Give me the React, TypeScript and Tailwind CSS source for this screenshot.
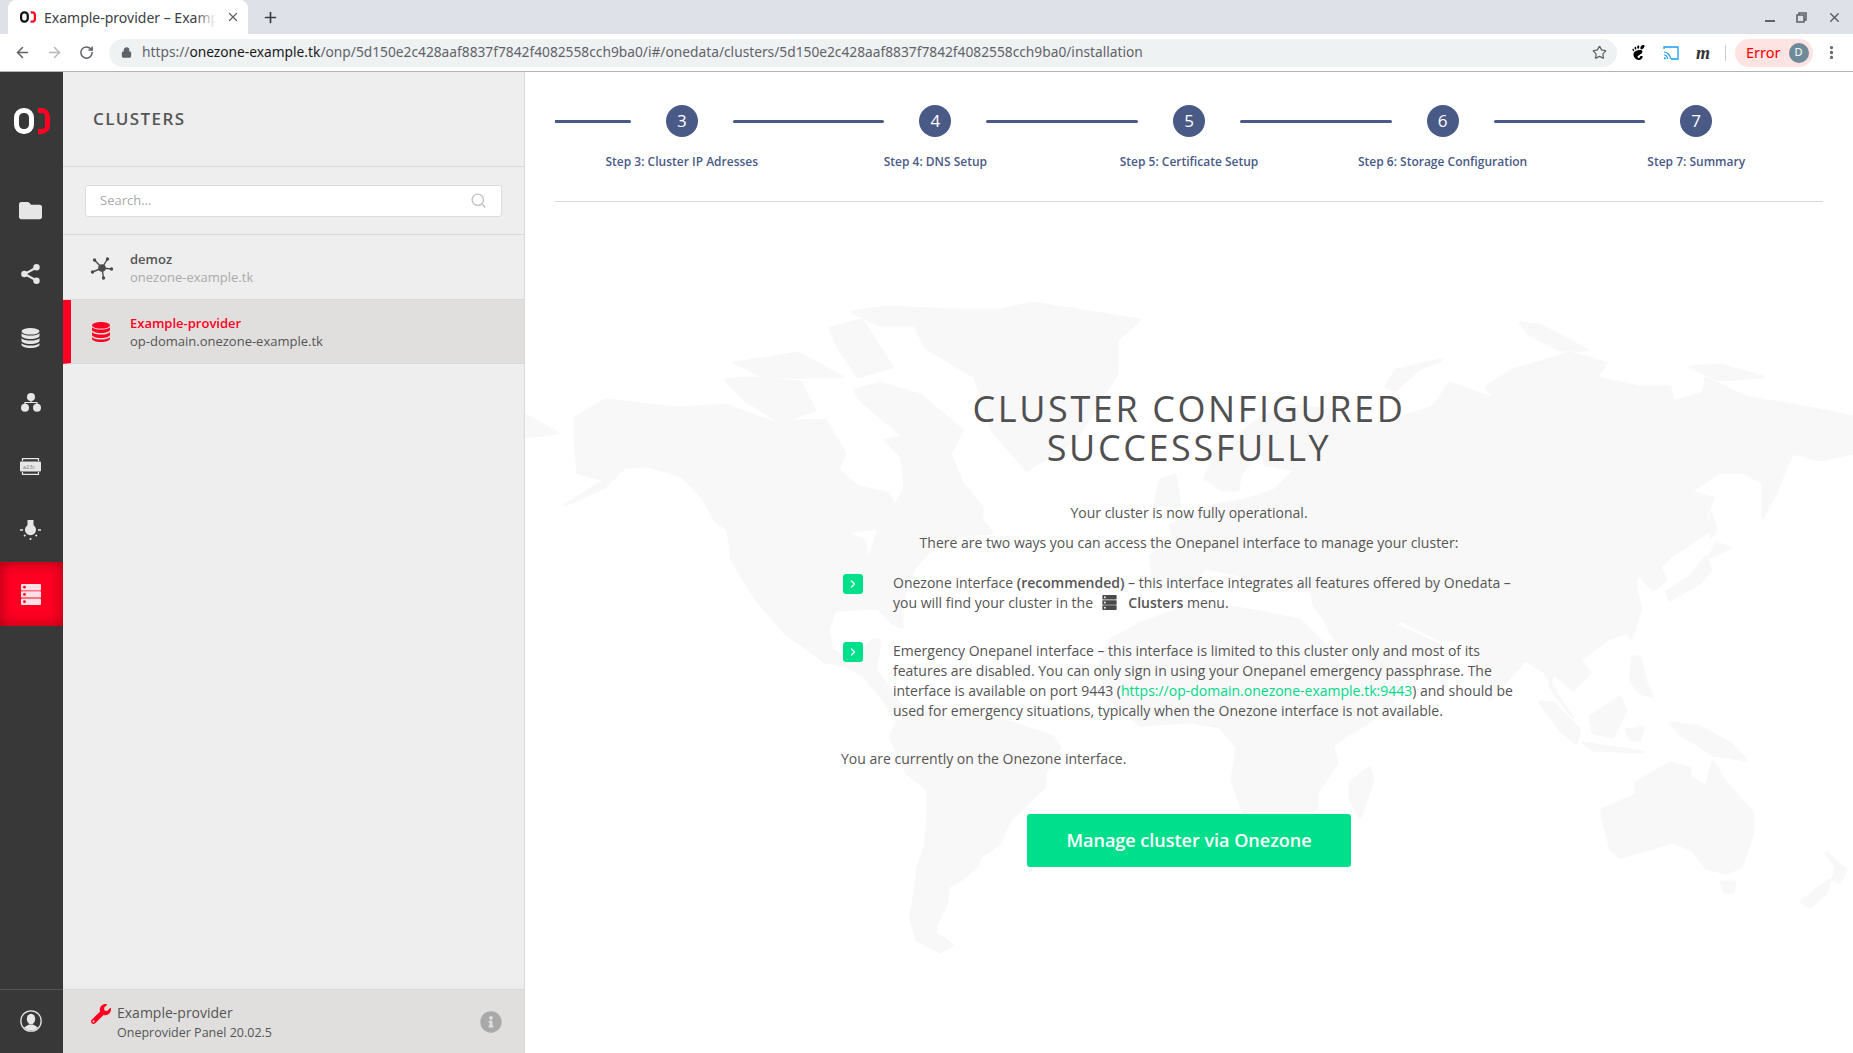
import { ArrowLeft, ArrowRight, ChevronRight, Lock, MoreVertical, Plus, RotateCw, Search, Star, X } from 'lucide-react';
import { FaFolder, FaInfoCircle, FaWrench } from 'react-icons/fa';
import { SiGnome } from 'react-icons/si';

const STEPS = [
  { n: 3, label: 'Step 3: Cluster IP Adresses' },
  { n: 4, label: 'Step 4: DNS Setup' },
  { n: 5, label: 'Step 5: Certificate Setup' },
  { n: 6, label: 'Step 6: Storage Configuration' },
  { n: 7, label: 'Step 7: Summary' },
];

// land masses, in page coordinates
const LAND = [
  // north america
  '575,418 605,400 675,408 725,405 772,422 825,420 845,453 838,470 858,487 888,493 895,507 905,487 902,457 885,440 928,433 948,448 962,483 982,507 982,520 992,533 960,535 928,553 915,567 905,590 902,607 902,627 892,623 878,608 835,610 828,630 832,650 852,663 872,640 880,640 878,655 875,670 890,690 905,712 893,715 880,695 863,675 843,665 825,662 802,645 785,633 765,610 752,593 732,560 728,530 715,520 702,497 682,476 648,466 625,467 605,487 565,505 605,480 578,473 575,440',
  // arctic islands
  '855,390 880,383 920,395 962,430 952,450 905,437 860,400',
  '725,380 750,378 800,382 815,410 780,422 745,400',
  '735,363 798,353 842,377 765,377',
  '830,328 862,320 892,367 858,377 838,347',
  // greenland
  '852,312 885,307 958,310 1000,310 1033,303 1140,320 1117,340 1117,373 1095,410 1075,440 1027,470 1000,440 992,430 975,377 925,347 915,325 880,325',
  // south america
  '890,737 907,773 928,790 928,817 925,847 918,867 915,893 910,917 917,940 940,952 953,945 935,933 937,923 947,903 948,887 960,880 977,867 980,857 1000,843 1010,820 1045,787 1045,773 1060,747 1053,737 1013,723 977,717 950,717 917,713 897,722',
  // africa
  '1133,628 1160,610 1200,603 1250,610 1300,620 1330,650 1350,680 1385,690 1400,672 1395,700 1365,725 1347,735 1333,745 1337,763 1317,793 1317,807 1290,830 1265,840 1243,813 1232,780 1237,747 1220,727 1190,722 1140,725 1110,700 1098,670 1110,640',
  '1370,767 1373,780 1360,817 1350,800 1350,783',
  // eurasia
  '1257,420 1290,405 1330,410 1345,425 1380,425 1433,407 1450,383 1496,400 1486,387 1513,370 1570,353 1606,363 1596,378 1640,387 1670,387 1673,402 1703,393 1706,378 1746,397 1820,410 1853,417 1853,453 1820,460 1793,453 1786,467 1776,493 1763,517 1763,483 1745,473 1720,472 1690,492 1713,498 1706,517 1710,530 1670,557 1660,567 1666,580 1653,590 1636,572 1636,590 1641,610 1633,630 1606,640 1580,660 1590,673 1573,690 1553,673 1550,687 1573,717 1560,700 1545,672 1525,660 1490,700 1465,640 1440,640 1400,620 1395,625 1440,645 1420,670 1375,695 1345,665 1325,620 1310,600 1290,595 1270,600 1240,575 1205,568 1185,590 1155,590 1150,555 1175,545 1170,525 1215,505 1245,500 1275,490 1295,470 1265,465 1262,445 1240,475 1238,490 1222,490 1205,478 1215,455',
  // uk, novaya zemlya, northern islands
  '1160,480 1175,475 1180,505 1155,505',
  '1386,387 1396,370 1441,360 1420,368 1396,390',
  '1520,323 1540,325 1587,350 1560,350 1530,335',
  '1690,367 1720,365 1763,377 1720,380',
  '525,415 558,433 525,437',
  // japan and sakhalin
  '1706,557 1711,570 1700,583 1670,600 1666,592 1690,577',
  '1716,543 1730,548 1710,557',
  '1711,513 1716,530 1711,537',
  '1636,627 1631,638 1628,632',
  // south east asia
  '1540,702 1553,703 1580,730 1576,743 1560,730',
  '1583,743 1643,752 1593,750',
  '1590,717 1620,697 1626,710 1613,737 1593,733',
  '1626,730 1643,727 1640,740 1630,740',
  '1633,657 1640,657 1646,683 1653,697 1640,693 1630,680',
  '1670,723 1700,727 1730,743 1746,760 1713,755 1696,743 1683,737',
  // australia and new zealand
  '1601,810 1636,795 1636,783 1670,763 1690,768 1690,777 1706,787 1713,762 1726,783 1753,813 1753,833 1741,867 1726,873 1706,868 1693,850 1673,842 1646,850 1620,857 1611,850 1605,827',
  '1721,882 1735,882 1733,892 1725,892',
  '1826,853 1846,870 1840,882 1833,880 1836,867',
  '1830,880 1826,893 1810,907 1801,902 1820,887',
];

// seas and lakes cut out of the land
const WATER = [
  '850,533 877,530 868,557 866,540',
  '1153,592 1230,582 1260,592 1310,592 1313,608 1260,610 1200,600 1140,622 1135,612',
  '1313,617 1318,617 1352,665 1348,668',
];

function Logo({ className, zero }: { className: string; zero: string }) {
  return (
    <svg viewBox="0 0 36 26" className={className}>
      <rect x="2.5" y="2.5" width="15" height="21" rx="7" fill="none" stroke={zero} strokeWidth="5" />
      <path d="M24 2.500h3.500a6 6 0 0 1 6 6v9a6 6 0 0 1-6 6H24" fill="none" stroke="#ff0022" strokeWidth="5" />
    </svg>
  );
}

function DatabaseIcon({ fill, className }: { fill: string; className: string }) {
  return (
    <svg viewBox="0 0 18 20" className={className} fill={fill}>
      <ellipse cx="9" cy="3.300" rx="9" ry="3.300" />
      <path d="M0 5.200v2.600c0 1.800 4 3.200 9 3.200s9-1.400 9-3.200V5.200c-1.500 1.500-5 2.300-9 2.300s-7.500-.8-9-2.300z" />
      <path d="M0 10.200v2.600c0 1.800 4 3.200 9 3.200s9-1.400 9-3.200v-2.600c-1.500 1.500-5 2.300-9 2.300s-7.500-.8-9-2.300z" />
      <path d="M0 15.200v1.500c0 1.800 4 3.300 9 3.300s9-1.500 9-3.300v-1.500c-1.500 1.500-5 2.300-9 2.300s-7.500-.8-9-2.300z" />
    </svg>
  );
}

function ShareIcon() {
  return (
    <svg viewBox="0 0 19 20" className="h-[20px] w-[19px]">
      <path d="M15.500 3.500 3.500 10l12 6.500" fill="none" stroke="#e6e6e6" strokeWidth="2" />
      <circle cx="15.500" cy="3.300" r="3.200" fill="#e6e6e6" />
      <circle cx="3.400" cy="10" r="3.200" fill="#e6e6e6" />
      <circle cx="15.500" cy="16.700" r="3.200" fill="#e6e6e6" />
    </svg>
  );
}

function TokenIcon() {
  return (
    <svg viewBox="0 0 21 17" className="h-[17px] w-[21px]">
      <path d="M2.500 3V.7h16V3M2.500 14v2.300h16V14" fill="none" stroke="#e6e6e6" strokeWidth="1.200" />
      <rect x="0" y="3.500" width="21" height="10" rx="1" fill="#e6e6e6" />
      <text x="3" y="10.500" fontSize="5.500" fill="#777" fontFamily="'Open Sans', sans-serif">a23c</text>
    </svg>
  );
}

function GroupsIcon() {
  return (
    <svg viewBox="0 0 20 19" className="h-[19px] w-[20px]">
      <path d="M10 6v3.500M4 12V9.500h12V12" fill="none" stroke="#e6e6e6" strokeWidth="1.200" />
      <circle cx="10" cy="4" r="4" fill="#e6e6e6" />
      <circle cx="4" cy="14.800" r="4" fill="#e6e6e6" />
      <circle cx="16" cy="14.800" r="4" fill="#e6e6e6" />
    </svg>
  );
}

function BulbIcon() {
  return (
    <svg viewBox="0 0 21 20" className="h-[20px] w-[21px]">
      <path d="M7.500 0h6v5l2 2.500a5.500 5.500 0 1 1-10 0l2-2.500z" fill="#e6e6e6" />
      <path d="M0 10h3M18 10h3M4 16l1.500-1M17 16l-1.500-1M10.500 18v2" stroke="#e6e6e6" strokeWidth="1.600" />
    </svg>
  );
}

function ClustersIcon({ fill, dot, className }: { fill: string; dot: string; className: string }) {
  return (
    <svg viewBox="0 0 20 21" className={className}>
      <rect y="0" width="20" height="6.400" rx="1" fill={fill} />
      <rect y="7.200" width="20" height="6.400" rx="0.500" fill={fill} />
      <rect y="14.500" width="20" height="6.400" rx="1" fill={fill} />
      <circle cx="3.500" cy="3.200" r="1.400" fill={dot} />
      <circle cx="3.500" cy="10.400" r="1.400" fill={dot} />
      <circle cx="3.500" cy="17.700" r="1.400" fill={dot} />
    </svg>
  );
}

function HubIcon() {
  return (
    <svg viewBox="0 0 24 24" className="h-[24px] w-[24px]">
      <path d="M12 12 17.500 3M12 12 21.500 13M12 12 13.500 22M12 12 2.500 16M12 12 4.500 4" stroke="#4a4a4a" strokeWidth="1.400" />
      <g fill="#4a4a4a">
        <circle cx="12" cy="12" r="3.800" />
        <circle cx="17.500" cy="3" r="1.700" />
        <circle cx="21.500" cy="13" r="1.700" />
        <circle cx="13.500" cy="22" r="1.700" />
        <circle cx="2.500" cy="16" r="1.700" />
        <circle cx="4.500" cy="4" r="1.700" />
      </g>
    </svg>
  );
}

function UserIcon() {
  return (
    <svg viewBox="0 0 22 22" className="h-[22px] w-[22px]">
      <defs>
        <clipPath id="user-clip">
          <circle cx="11" cy="11" r="9.600" />
        </clipPath>
      </defs>
      <circle cx="11" cy="11" r="10.200" fill="#383838" stroke="#e6e6e6" strokeWidth="1.300" />
      <g clipPath="url(#user-clip)" fill="#e6e6e6">
        <ellipse cx="11" cy="9" rx="4.200" ry="5.200" />
        <path d="M2 22c.5-5 5-6 7-7.500h4c2 1.500 6.500 2.500 7 7.500z" />
      </g>
    </svg>
  );
}

function Toolbar() {
  return (
    <div className="flex h-[38px] items-center border-b border-[#b4b4b4] bg-white font-['Noto_Sans',sans-serif]">
      <div className="flex w-[109px] items-center pl-[14px]">
        <ArrowLeft size={17} strokeWidth={2.2} className="text-[#5f6368]" />
        <ArrowRight size={17} strokeWidth={2.2} className="ml-[15px] text-[#b6b9bd]" />
        <RotateCw size={15} strokeWidth={2.4} className="ml-[16px] text-[#5f6368]" />
      </div>
      <div className="flex h-[28px] w-[1508px] items-center rounded-full bg-[#eff2f3] pl-[12px] pr-[10px]">
        <Lock size={11} strokeWidth={2.4} fill="#5f6368" className="text-[#5f6368]" />
        <span className="ml-[10px] flex-1 whitespace-nowrap text-[13.750px] text-[#5f6368]">
          https://<span className="text-[#1a1a1a]">onezone-example.tk</span>/onp/5d150e2c428aaf8837f7842f4082558cch9ba0/i#/onedata/clusters/5d150e2c428aaf8837f7842f4082558cch9ba0/installation
        </span>
        <Star size={15} strokeWidth={2} className="text-[#5f6368]" />
      </div>
      <SiGnome size={15} className="ml-[14px] text-black" />
      <svg viewBox="0 0 16 14" className="ml-[17px] h-[14px] w-[16px]">
        <path d="M1 3V1h14v12H8" fill="none" stroke="#1a9bf0" strokeWidth="1.300" />
        <path d="M1 6a7 7 0 0 1 6.500 7M1 9a4 4 0 0 1 3.500 4" fill="none" stroke="#1a9bf0" strokeWidth="1.200" />
        <circle cx="1.800" cy="12.300" r="1" fill="#1a9bf0" />
      </svg>
      <span className="ml-[17px] w-[16px] font-['Liberation_Serif',serif] text-[18px] font-bold italic leading-none text-[#333]">m</span>
      <div className="ml-[13px] h-[16px] w-px bg-[#ccc]" />
      <div className="ml-[9px] flex h-[28px] w-[78px] items-center rounded-full bg-[#fde3e1] pl-[11px]">
        <span className="text-[14.500px] text-[#f00]">Error</span>
        <span className="ml-[8px] flex h-[20px] w-[20px] items-center justify-center rounded-full bg-[#6f8a99] text-[11px] text-white">D</span>
      </div>
      <MoreVertical size={17} strokeWidth={2.6} className="ml-[10px] text-[#5f6368]" />
    </div>
  );
}

function TabStrip() {
  return (
    <div className="flex h-[34px] items-end bg-[#dee1e7] font-['Noto_Sans',sans-serif]">
      <div className="relative ml-[8px] flex h-[34px] w-[240px] items-center rounded-t-[8px] bg-white pl-[12px]">
        <Logo className="h-[12px] w-[16px]" zero="#111" />
        <div className="relative ml-[8px] w-[172px] overflow-hidden whitespace-nowrap text-[14px] text-[#3c4043]">
          Example-provider – Example
          <div className="absolute inset-y-0 right-0 w-[20px] bg-gradient-to-r from-transparent to-white" />
        </div>
        <X size={14} strokeWidth={2.2} className="ml-[10px] text-[#5f6368]" />
      </div>
      <Plus size={17} strokeWidth={2.4} className="mb-[8px] ml-[14px] text-[#3c4043]" />
      <div className="mb-[9px] ml-auto flex items-center text-[#5f6368]">
        <div className="mr-[21px] mt-[6px] h-[2px] w-[10px] bg-[#5f6368]" />
        <svg viewBox="0 0 11 11" className="mr-[20px] h-[11px] w-[11px]">
          <path d="M3 3V1h7v7H8M1 3h7v7H1z" fill="none" stroke="#5f6368" strokeWidth="1.600" />
        </svg>
        <X size={15} strokeWidth={2.4} className="mr-[11px]" />
      </div>
    </div>
  );
}

function Rail() {
  return (
    <nav className="flex w-[63px] shrink-0 flex-col bg-[#383838]">
      <div className="flex h-[106px] justify-center pt-[36px]">
        <Logo className="h-[26px] w-[36px]" zero="#fff" />
      </div>
      <div className="flex h-[64px] items-center justify-center text-[#e6e6e6]">
        <FaFolder size={23} className="-ml-[2px]" />
      </div>
      <div className="flex h-[64px] items-center justify-center">
        <div className="-ml-[2px]">
          <ShareIcon />
        </div>
      </div>
      <div className="flex h-[64px] items-center justify-center">
        <DatabaseIcon fill="#e6e6e6" className="-ml-[2px] h-[20px] w-[19px]" />
      </div>
      <div className="flex h-[64px] items-center justify-center">
        <div className="-ml-[2px]">
          <GroupsIcon />
        </div>
      </div>
      <div className="flex h-[64px] items-center justify-center">
        <div className="-ml-[2px]">
          <TokenIcon />
        </div>
      </div>
      <div className="flex h-[64px] items-center justify-center">
        <div className="-ml-[2px]">
          <BulbIcon />
        </div>
      </div>
      <div className="flex h-[64px] items-center justify-center bg-[#ff0022] shadow-[inset_0_0_14px_rgba(90,0,10,0.55)]">
        <ClustersIcon fill="#ffe0e4" dot="#ff0022" className="-ml-[2px] h-[21px] w-[20px]" />
      </div>
      <div className="mt-auto flex h-[64px] items-center justify-center border-t border-[#555] pb-[2px]">
        <div className="-ml-[2px]">
          <UserIcon />
        </div>
      </div>
    </nav>
  );
}

function Sidebar() {
  return (
    <aside className="flex w-[462px] shrink-0 flex-col border-r border-[#d9d9d9] bg-[#eeeeee] text-[13px]">
      <div className="flex h-[95px] items-center border-b border-[#d9d9d9] pl-[30px] text-[17px] font-semibold tracking-[1.400px] text-[#555]">
        CLUSTERS
      </div>
      <div className="flex h-[68px] items-center border-b border-[#d9d9d9] px-[22px]">
        <div className="flex h-[32px] w-[417px] items-center justify-between rounded-[3px] border border-[#dcdcdc] bg-white pl-[14px] pr-[14px]">
          <span className="pt-px text-[13px] text-[#aaa]">Search...</span>
          <Search size={17} strokeWidth={2} className="text-[#c4c4c4]" />
        </div>
      </div>
      <div className="flex h-[65px] items-center border-b border-[#d9d9d9] pt-px">
        <div className="flex w-[67px] justify-end pr-[16px]">
          <HubIcon />
        </div>
        <div className="flex flex-col leading-[18px]">
          <span className="font-semibold text-[#555]">demoz</span>
          <span className="text-[#aaa]">onezone-example.tk</span>
        </div>
      </div>
      <div className="flex h-[64px] items-center border-b border-[#d9d9d9] border-l-[8px] border-l-[#ff0022] bg-[#e0dfdd]">
        <div className="flex w-[59px] justify-end pr-[20px]">
          <DatabaseIcon fill="#ff0022" className="h-[20px] w-[18px]" />
        </div>
        <div className="flex flex-col leading-[18px]">
          <span className="font-semibold text-[#ff0022]">Example-provider</span>
          <span className="text-[#555]">op-domain.onezone-example.tk</span>
        </div>
      </div>
      <div className="mt-auto flex h-[64px] items-center justify-between border-t border-[#d9d9d9] bg-[#e0dfdd] pl-[28px] pr-[22px] pt-[2px] shadow-[0_-4px_6px_rgba(0,0,0,0.02)]">
        <div className="flex">
          <FaWrench size={20} className="mr-[6px] mt-[1px] text-[#ff0022]" />
          <div className="flex flex-col text-[#555]">
            <span className="text-[14px] leading-[20px]">Example-provider</span>
            <span className="text-[12.500px] leading-[20px]">Oneprovider Panel 20.02.5</span>
          </div>
        </div>
        <FaInfoCircle size={22} className="-mt-[2px] text-[#a9a9a9]" />
      </div>
    </aside>
  );
}

function Stepper() {
  return (
    <div className="grid grid-cols-5">
      {STEPS.map((step, i) => (
        <div key={step.n} className="flex flex-col items-center">
          <div className="flex w-full items-center">
            <div className="h-[3px] flex-1 rounded-r-full bg-[#4a5a87]" />
            <div className="flex w-[102px] justify-center">
              <span className="flex h-[32px] w-[32px] items-center justify-center rounded-full bg-[#4a5a87] text-[17px] text-white">
                {step.n}
              </span>
            </div>
            <div className={i === STEPS.length - 1 ? 'h-[3px] flex-1' : 'h-[3px] flex-1 rounded-l-full bg-[#4a5a87]'} />
          </div>
          <span className="mt-[16px] text-[12px] font-semibold leading-[18px] text-[#4a5a87]">{step.label}</span>
        </div>
      ))}
    </div>
  );
}

function Bullet() {
  return (
    <span className="flex h-[20px] w-[20px] shrink-0 items-center justify-center rounded-[3px] bg-[#00e08c] text-white">
      <ChevronRight size={12} strokeWidth={2.4} />
    </span>
  );
}

function WorldMap() {
  return (
    <svg viewBox="525 72 1328 981" className="pointer-events-none absolute left-0 top-0 h-full w-full">
      {LAND.map((points) => (
        <polygon key={points} points={points} fill="#f8f8f8" stroke="#f8f8f8" strokeWidth="3" strokeLinejoin="round" />
      ))}
      {WATER.map((points) => (
        <polygon key={points} points={points} fill="#fff" />
      ))}
    </svg>
  );
}

function Main() {
  return (
    <main className="relative flex-1 overflow-hidden bg-white pl-[30px] pr-[30px] pt-[33px] text-[14px] leading-[20px] text-[#555]">
      <WorldMap />
      <div className="relative">
        <Stepper />
        <div className="mt-[30px] h-px bg-[#d9d9d9]" />
        <div className="mx-auto mt-[187px] flex w-[696px] flex-col items-center">
          <h1 className="text-center text-[36px] font-normal uppercase leading-[39px] tracking-[2.600px] text-[#505050]">
            Cluster configured
            <br />
            successfully
          </h1>
          <p className="mt-[36px]">Your cluster is now fully operational.</p>
          <p className="mt-[10px]">There are two ways you can access the Onepanel interface to manage your cluster:</p>
          <div className="mt-[20px] flex w-full gap-[30px] pl-[2px]">
            <div className="pt-px">
              <Bullet />
            </div>
            <p>
              Onezone interface <strong className="font-semibold">(recommended)</strong> – this interface integrates all
              features offered by Onedata – you will find your cluster in the{' '}
              <ClustersIcon fill="#4a4a4a" dot="#eee" className="mx-[5px] inline-block h-[15px] w-[15px] align-[-2px]" />{' '}
              <strong className="ml-[3px] font-semibold">Clusters</strong> menu.
            </p>
          </div>
          <div className="mt-[28px] flex w-full gap-[30px] pl-[2px]">
            <div className="pt-px">
              <Bullet />
            </div>
            <p>
              Emergency Onepanel interface – this interface is limited to this cluster only and most of its features are
              disabled. You can only sign in using your Onepanel emergency passphrase. The interface is available on
              port 9443 (<a className="text-[#00d98a]">https://op-domain.onezone-example.tk:9443</a>) and should be used
              for emergency situations, typically when the Onezone interface is not available.
            </p>
          </div>
          <p className="mt-[28px] w-full">You are currently on the Onezone interface.</p>
          <button className="mt-[45px] h-[53px] w-[324px] rounded-[3px] bg-[#00e08c] pb-[2px] text-[18px] font-semibold text-white">
            Manage cluster via Onezone
          </button>
        </div>
      </div>
    </main>
  );
}

export default function App() {
  return (
    <div className="flex h-screen w-full flex-col overflow-hidden font-['Open_Sans',sans-serif]">
      <TabStrip />
      <Toolbar />
      <div className="flex min-h-0 flex-1">
        <Rail />
        <Sidebar />
        <Main />
      </div>
    </div>
  );
}
